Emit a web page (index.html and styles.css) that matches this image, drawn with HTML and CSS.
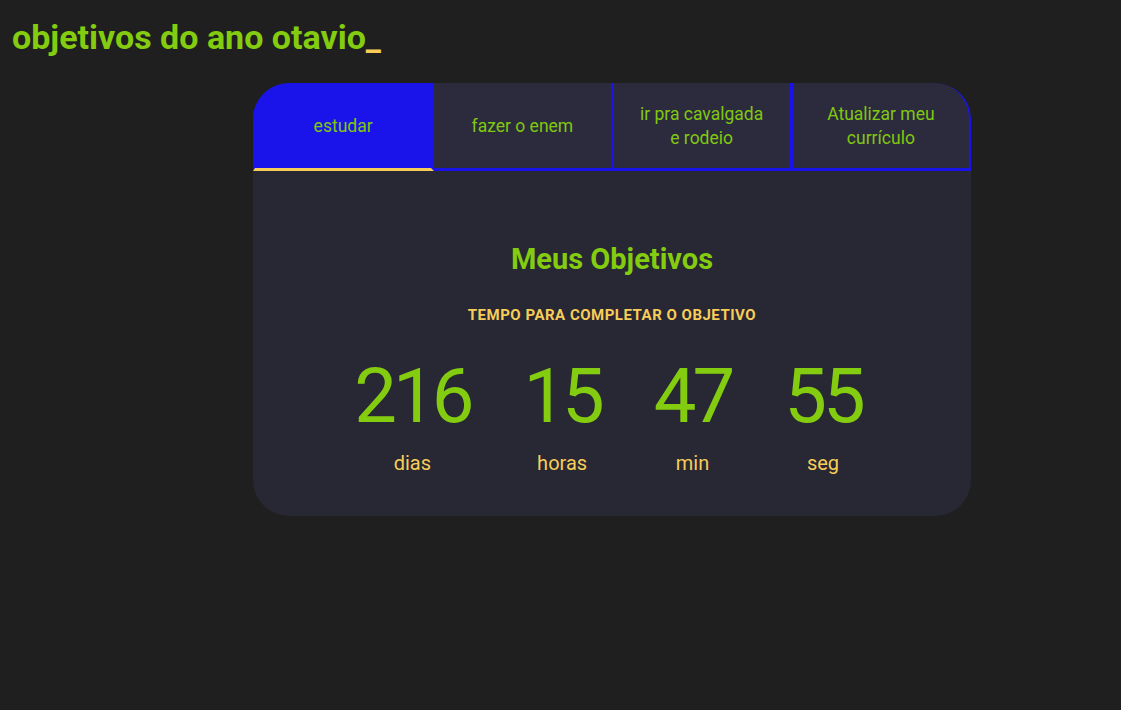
FILE: index.html
```html
<!DOCTYPE html>
<html lang="pt-BR">
<head>
<meta charset="utf-8">
<title>objetivos do ano otavio</title>
<link rel="stylesheet" href="styles.css">
</head>
<body>
<header class="top">
  <h1 class="title">objetivos do ano otavio<span class="cursor">_</span></h1>
</header>
<main class="main">
  <section class="card">
    <nav class="tabs">
      <button class="tab active">estudar</button>
      <button class="tab">fazer o enem</button>
      <button class="tab">ir pra cavalgada<br>e rodeio</button>
      <button class="tab last">Atualizar meu<br>currículo</button>
    </nav>
    <div class="panel">
      <h2 class="panel-title">Meus Objetivos</h2>
      <p class="panel-sub">TEMPO PARA COMPLETAR O OBJETIVO</p>
      <div class="countdown">
        <div class="unit"><span class="num">216</span><span class="label">dias</span></div>
        <div class="unit"><span class="num">15</span><span class="label">horas</span></div>
        <div class="unit"><span class="num">47</span><span class="label">min</span></div>
        <div class="unit"><span class="num">55</span><span class="label">seg</span></div>
      </div>
    </div>
  </section>
</main>
</body>
</html>
```
FILE: styles.css
```css
* { box-sizing: border-box; }
html, body { margin: 0; padding: 0; }
body {
  background: #1f1f1f;
  font-family: Roboto, "Liberation Sans", sans-serif;
  color: #84cc10;
  min-height: 710px;
}
.top { padding: 16px 12px 0; }
.title {
  margin: 0;
  font-weight: 700;
  font-size: 34px;
  line-height: 42px;
  color: #84cc10;
}
.cursor { color: #f7cd58; }
.main { padding: 25px 0 0 253px; }
.card {
  width: 718px;
  background: #282734;
  border-radius: 36px;
  overflow: hidden;
}
.tabs { display: flex; }
.tab {
  flex: 1 1 0;
  height: 88px;
  border: 0;
  border-right: 3px solid #1a14eb;
  border-bottom: 3px solid #1a14eb;
  background: #2c2b3e;
  color: #80c80f;
  font-family: Roboto, "Liberation Sans", sans-serif;
  font-size: 17.5px;
  line-height: 24px;
  padding: 0 6px;
  cursor: pointer;
}
.tab.active {
  background: #1a14eb;
  border-bottom-color: #f7cd58;
  border-left: 2px solid #1a14eb;
}
.tab.last { border-top-right-radius: 36px; border-right-width: 2px; }
.panel {
  padding: 71px 0 41px;
  text-align: center;
}
.panel-title {
  margin: 0;
  font-size: 29px;
  line-height: 34px;
  font-weight: 700;
  color: #84cc10;
}
.panel-sub {
  margin: 30px 0 0;
  font-size: 15px;
  line-height: 18px;
  font-weight: 700;
  letter-spacing: 0.5px;
  color: #f7cd58;
}
.countdown {
  margin-top: 32px;
  display: flex;
  justify-content: center;
  gap: 53px;
  padding-right: 8px;
}
.unit { display: flex; flex-direction: column; align-items: center; }
.num {
  font-size: 76px;
  line-height: 80px;
  letter-spacing: -4px;
  margin-right: -4px;
  padding-right: 4px;
  color: #84cc10;
}
.label {
  margin-top: 15px;
  font-size: 20px;
  line-height: 24px;
  color: #f7cd58;
}
```
